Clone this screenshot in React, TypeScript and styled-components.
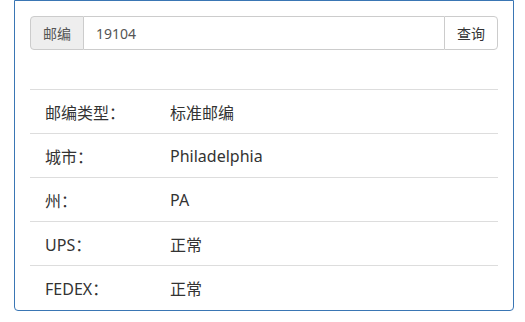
import styled, { createGlobalStyle } from 'styled-components';

const GlobalStyle = createGlobalStyle`
  body {
    margin: 0;
    background: #fff;
    font-family: 'Noto Sans', 'Noto Sans CJK SC', sans-serif;
    color: #333;
  }
`;

const Page = styled.div`
  padding: 0 11px 0 14px;
`;

const Panel = styled.div`
  border: 1px solid #3a76b4;
  border-radius: 0 0 4px 4px;
  padding: 15px 15px 0;
  background: #fff;
`;

const InputGroup = styled.div`
  display: flex;
  height: 34px;
  font-size: 14px;
`;

const Addon = styled.span`
  display: flex;
  align-items: center;
  padding: 0 12px;
  background: #eee;
  color: #555;
  border: 1px solid #ccc;
  border-radius: 4px 0 0 4px;
`;

const Input = styled.input`
  flex: 1;
  min-width: 0;
  border: 1px solid #ccc;
  border-left: none;
  border-right: none;
  padding: 0 12px;
  font: inherit;
  color: #555;
  outline: none;
`;

const Button = styled.button`
  padding: 0 12px;
  background: #fff;
  color: #333;
  border: 1px solid #ccc;
  border-radius: 0 4px 4px 0;
  font: inherit;
`;

const Table = styled.table`
  width: 100%;
  margin-top: 39px;
  border-collapse: collapse;
  font-size: 16px;
`;

const Row = styled.tr`
  height: 44px;
  border-top: 1px solid #ddd;
`;

const Label = styled.td`
  width: 95px;
  padding: 0 15px;
`;

const Value = styled.td`
  padding: 0 15px;
`;

const rows: [string, string][] = [
  ['邮编类型：', '标准邮编'],
  ['城市：', 'Philadelphia'],
  ['州：', 'PA'],
  ['UPS：', '正常'],
  ['FEDEX：', '正常'],
];

export default function App() {
  return (
    <Page>
      <GlobalStyle />
      <Panel>
        <InputGroup>
          <Addon>邮编</Addon>
          <Input defaultValue="19104" />
          <Button>查询</Button>
        </InputGroup>
        <Table>
          <tbody>
            {rows.map(([k, v]) => (
              <Row key={k}>
                <Label>{k}</Label>
                <Value>{v}</Value>
              </Row>
            ))}
          </tbody>
        </Table>
      </Panel>
    </Page>
  );
}
